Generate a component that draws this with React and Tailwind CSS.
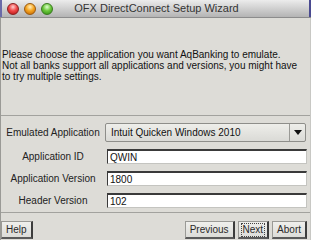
import React from "react";

function Light({ color }) {
  const styles = {
    red: "bg-[radial-gradient(circle_at_50%_30%,#ffd0d0_0%,#f04848_45%,#b01010_100%)] border-[#8a2020]",
    orange: "bg-[radial-gradient(circle_at_50%_30%,#fff0c0_0%,#f5a623_45%,#c06000_100%)] border-[#9a5a10]",
    green: "bg-[radial-gradient(circle_at_50%_30%,#e0ffd0_0%,#6cc83c_45%,#2e8a10_100%)] border-[#3a7a20]",
  };
  return <div className={`w-[12px] h-[12px] rounded-full border ${styles[color]}`} />;
}

function Field({ label, value }) {
  return (
    <div className="flex items-center h-[15px]">
      <div className="w-[104px] text-center text-[10px] text-[#222]">{label}</div>
      <div className="ml-[2px] w-[200px] h-[15px] bg-white border-t-2 border-l border-t-[#3a3a3a] border-l-[#3a3a3a] border-b border-r border-b-[#c4c4c0] border-r-[#c4c4c0] flex items-center pl-[2px] text-[10px] text-[#111]">
        {value}
      </div>
    </div>
  );
}

function Button({ children, focus }) {
  return (
    <div className="h-[18px] px-[2px] flex items-center bg-gradient-to-b from-[#efefec] to-[#dcdcd8] border border-[#9a9a96] border-r-2 border-b-2 border-r-[#3c3c3c] border-b-[#5a5a5a] text-[10px] text-[#2a2a2a]">
      <span className={focus ? "border border-dotted border-[#444] px-[1px] leading-[12px]" : "px-[2px] leading-[12px]"}>
        {children}
      </span>
    </div>
  );
}

export default function App() {
  return (
    <div className="w-[311px] h-[240px] overflow-hidden bg-[#dddcd7] font-['Liberation_Sans',Arial,sans-serif] flex flex-col">
      {/* title bar */}
      <div className="relative h-[18px] shrink-0 bg-gradient-to-b from-[#ececec] to-[#b4b4b4] border-b border-[#8c8c8c] flex items-center">
        <div className="absolute left-0 top-0 w-[2px] h-full bg-[#6a6aa8]" />
        <div className="absolute right-0 top-0 w-[2px] h-full bg-[#4a4a90]" />
        <div className="flex items-center gap-[5px] pl-[7px]">
          <Light color="red" />
          <Light color="orange" />
          <Light color="green" />
        </div>
        <div className="absolute inset-x-0 top-0 h-full flex items-center justify-center pl-[2px] text-[11px] text-[#333]">
          OFX DirectConnect Setup Wizard
        </div>
      </div>

      <div className="flex-1 flex flex-col border-l border-[#9a9a96] border-r border-r-[#c8c8c4]">
        <div className="mt-[31px] pl-[1px] text-[10px] leading-[11px] text-[#111] whitespace-nowrap">
          <div>Please choose the application you want AqBanking to emulate.</div>
          <div>Not all banks support all applications and versions, you might have</div>
          <div>to try multiple settings.</div>
        </div>

        <div className="mt-[33px] border-t border-[#a2a29e]" />

        <div className="mt-[7px] flex items-center h-[19px]">
          <div className="w-[104px] text-center text-[10px] text-[#222]">Emulated Application</div>
          <div className="w-[201px] h-[19px] flex items-center bg-gradient-to-b from-[#eeeeea] to-[#dadad6] border border-[#8e8e8a] rounded-[2px]">
            <div className="flex-1 pl-[5px] text-[10px] text-[#111]">Intuit Quicken Windows 2010</div>
            <div className="w-[16px] h-full border-l border-[#9a9a96] flex items-center justify-center">
              <svg width="8" height="5" viewBox="0 0 8 5">
                <path d="M0 0 L8 0 L4 5 Z" fill="#111" />
              </svg>
            </div>
          </div>
        </div>

        <div className="mt-[7px] flex flex-col gap-[7px]">
          <Field label="Application ID" value="QWIN" />
          <Field label="Application Version" value="1800" />
          <Field label="Header Version" value="102" />
        </div>

        <div className="mt-[4px] border-t border-[#a2a29e]" />

        <div className="mt-[8px] flex items-start pr-[3px]">
          <Button>Help</Button>
          <div className="flex-1" />
          <div className="flex gap-[3px]">
            <Button>Previous</Button>
            <Button focus>Next</Button>
            <Button>Abort</Button>
          </div>
        </div>
      </div>
    </div>
  );
}
